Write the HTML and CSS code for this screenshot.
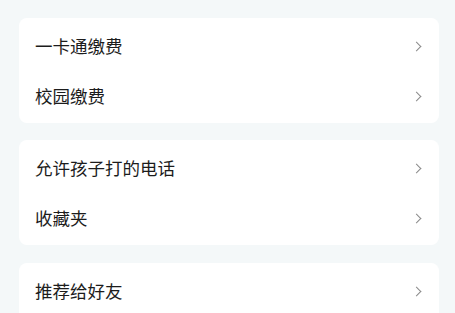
FILE: index.html
```html
<!DOCTYPE html>
<html lang="zh-CN">
<head>
    <meta charset="UTF-8">
    <meta name="viewport" content="width=device-width, initial-scale=1.0">
    <title>设置</title>
    <link rel="stylesheet" href="styles.css">
</head>
<body>
    <div class="page">
        <div class="card">
            <div class="row"><span class="label">一卡通缴费</span><span class="arrow"></span></div>
            <div class="row"><span class="label">校园缴费</span><span class="arrow"></span></div>
        </div>

        <div class="card">
            <div class="row"><span class="label">允许孩子打的电话</span><span class="arrow"></span></div>
            <div class="row"><span class="label">收藏夹</span><span class="arrow"></span></div>
        </div>

        <div class="card">
            <div class="row"><span class="label">推荐给好友</span><span class="arrow"></span></div>
        </div>
    </div>
</body>
</html>
```

FILE: styles.css
```css
html, body {
    margin: 0;
    padding: 0;
    height: 100%;
    overflow: hidden;
}

body {
    background: #f4f8f9;
    font-family: "Noto Sans CJK SC", "Noto Sans", sans-serif;
    color: #1c1c1c;
}

.page {
    padding: 18px 16px 0 19px;
    display: flex;
    flex-direction: column;
    gap: 17px;
}

.card {
    background: #fff;
    border-radius: 8px;
    padding: 3px 0 2px;
}

.card:nth-child(3) {
    margin-top: 1px;
    padding-bottom: 20px;
}

.row {
    height: 50px;
    display: flex;
    align-items: center;
    justify-content: space-between;
    padding: 0 16px;
}

.label {
    font-size: 17.5px;
    line-height: 1;
}

.arrow {
    width: 6px;
    height: 6px;
    border-top: 1.5px solid #8a8a8a;
    border-right: 1.5px solid #8a8a8a;
    transform: rotate(45deg);
    margin-right: 3px;
}
```
